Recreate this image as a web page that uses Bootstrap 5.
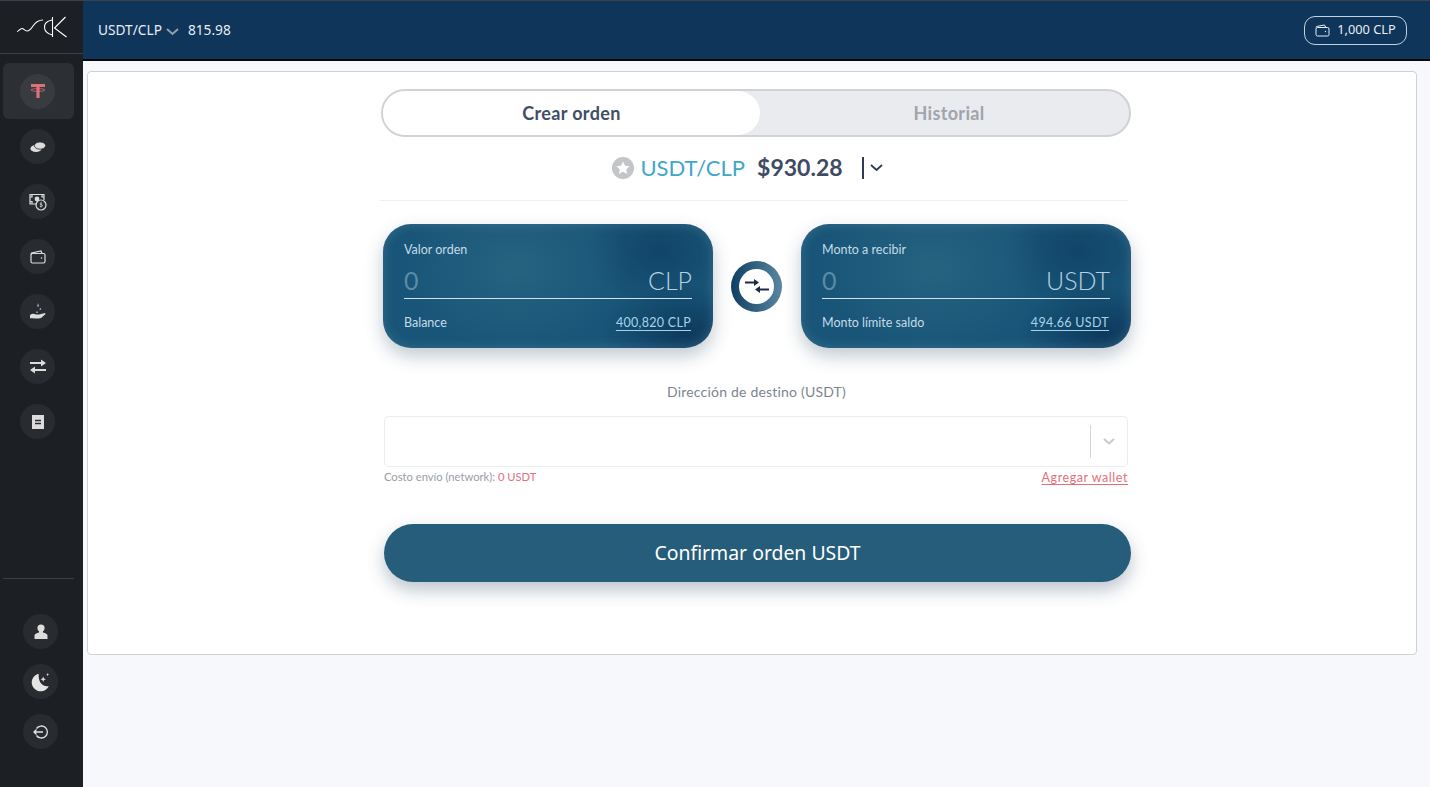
<!DOCTYPE html>
<html lang="es">
<head>
    <meta charset="UTF-8">
    <meta name="viewport" content="width=device-width, initial-scale=1.0">
    <title>Crear orden</title>
    <link href="https://cdn.jsdelivr.net/npm/bootstrap@5.3.3/dist/css/bootstrap.min.css" rel="stylesheet">
    <style>
        html, body { height: 100%; }
        body { background: #f6f8fb; font-family: "Lato", "Open Sans", sans-serif; overflow: hidden; }
        .side-bar { width: 83px; height: 787px; background: #1c2024; border-top: 1px solid #3c4148; flex: none; }
        .side-logo { height: 53px; border-bottom: 1px solid #3b3f43; }
        .side-main { padding-top: 9px; height: 524px; }
        .side-link { width: 71px; height: 55px; margin-left: 3px; padding-right: 2px; border-radius: 6px; }
        .side-link.is-on { background: #2c3034; height: 56px; }
        .side-dot { width: 35px; height: 35px; border-radius: 50%; background: #282b2f; }
        .side-link.is-on .side-dot { background: #383c40; }
        .side-foot { border-top: 1px solid #3b3f43; margin: 0 9px 0 3px; padding: 35px 0 0 4px; gap: 15px; }
        .top-bar { height: 61px; background: #10355a; border-top: 1px solid #3c4148; border-bottom: 2px solid #07090c; padding: 0 23px 0 15px; font-family: "Noto Sans", sans-serif; color: #e8eef4; font-size: 13.7px; }
        .top-pair { margin-right: 9px; }
        .wallet-pill { width: 103px; height: 29px; border: 1px solid #c3d2de; border-radius: 11px; font-size: 12.8px; gap: 7px; }
        .page-wrap { padding: 10px 13px 0 4px; }
        .order-box { height: 584px; border: 1px solid #cfd1d4; border-radius: 4px; padding-top: 17px; }
        .order-col { width: 750px; margin-left: 293px; }
        .tab-track { height: 48px; background: #e9ebef; border: 2px solid #d0d2d6; border-radius: 24px; font-size: 18px; font-weight: 700; letter-spacing: .35px; }
        .tab-on { width: 377px; background: #fff; color: #3f4e66; border-radius: 22px; }
        .tab-off { color: #a0a4ac; padding-left: 9px; }
        .pair-row { height: 63px; gap: 12px; font-size: 22px; padding: 0 17px 2px 0; }
        .pair-name { color: #3fa7c9; margin-left: -6px; }
        .pair-price { color: #3f4b63; font-weight: 700; font-size: 23px; }
        .pair-caret { border-left: 2px solid #2f3b50; height: 22px; margin-left: 7px; padding-left: 6px; }
        .pair-line { height: 1px; background: #eeeff1; margin: 0 3px 0 -1px; }
        .amount-row { margin-top: 23px; padding-left: 2px; }
        .amount-card { width: 330px; height: 124px; border-radius: 28px; padding: 17px 21px 0; color: #c4dbe8; font-size: 12.5px; line-height: 18px;
            background: radial-gradient(ellipse 34% 70% at 40% 35%, #266381 0%, rgba(38,99,129,0) 100%),
                        radial-gradient(ellipse 26% 40% at 92% 88%, #0d3a5e 0%, rgba(13,58,94,0) 100%),
                        radial-gradient(ellipse 22% 45% at 84% 22%, #124469 0%, rgba(18,68,105,0) 100%),
                        #185578;
            box-shadow: 0 8px 18px rgba(30, 60, 90, .28), inset 0 0 12px rgba(170, 195, 210, .22); }
        .amount-line { border-bottom: 1px solid #cfe3ee; height: 33px; margin-top: 7px; padding-bottom: 3px; font-size: 25px; font-weight: 300; line-height: 28px; color: #b6d2e2; }
        .amount-input { background: transparent; border: 0; outline: 0; padding: 0; width: 100px; height: 28px; color: #fff; }
        .amount-input::placeholder { color: #5b8ba6; opacity: 1; }
        .amount-foot { margin: 15px 1px 0 0; }
        .amount-link { color: #a5d4ea; letter-spacing: .3px; text-decoration: underline; text-underline-offset: 3px; }
        .swap-ring { width: 51px; height: 51px; border-radius: 50%; background: linear-gradient(90deg, #0f3f63, #5a86a0); margin-left: 18px; margin-right: 19px; }
        .swap-core { width: 35px; height: 35px; border-radius: 50%; background: #fff; }
        .dest-label { margin-top: 33px; font-size: 14px; color: #7d8492; letter-spacing: .2px; height: 21px; margin-left: 1px; }
        .dest-select { height: 51px; margin: 14px 3px 0; border: 1px solid #ebecee; border-radius: 5px; padding-right: 12px; }
        .dest-sep { width: 1px; height: 33px; background: #d4d5d7; margin-right: 12px; }
        .dest-note { margin: 2px 3px 0; font-size: 11.2px; color: #9a9ea6; }
        .dest-red { color: #e4707d; }
        .dest-wallet { color: #e4707d; font-size: 12.5px; text-decoration: underline; text-underline-offset: 2px; letter-spacing: .55px; }
        .confirm-btn { display: block; width: 747px; height: 58px; margin: 36px 0 0 3px; background: #255d7a; color: #fff; border: 0; border-radius: 29px; font-family: "Noto Sans", sans-serif; font-size: 19.4px; box-shadow: 0 8px 18px rgba(30, 60, 90, .3); }
        .confirm-btn:hover { background: #255d7a; color: #fff; }
    </style>
</head>
<body>
    <div class="d-flex">
        <aside class="side-bar d-flex flex-column">
            <div class="side-logo d-flex align-items-center justify-content-center">
                <svg width="52" height="24" viewBox="0 0 52 24" fill="none" stroke="#fff" stroke-width="1.1">
                    <path d="M1 16.500c1.500 0 3-3 5-3s2.500 2.500 5 2.500 4-2 6-5 5-6 10-6"/>
                    <path d="M36 5c-5 1-8 4-7.500 8s4 6 8 7"/>
                    <path d="M36.500 2v20M49.500 2 38.500 13l12 9"/>
                </svg>
            </div>
            <nav class="side-main d-flex flex-column">
                <a class="side-link is-on d-flex align-items-center justify-content-center" href="#">
                    <span class="side-dot d-flex align-items-center justify-content-center">
                        <svg width="16" height="16" viewBox="0 0 16 16" fill="#e07078"><path d="M1 1h14v3H9.600v11H6.400V4H1z"/><ellipse cx="8" cy="7" rx="7" ry="1.400" fill="none" stroke="#e07078" stroke-width=".7"/></svg>
                    </span>
                </a>
                <a class="side-link d-flex align-items-center justify-content-center" href="#">
                    <span class="side-dot d-flex align-items-center justify-content-center">
                        <svg width="16" height="12" viewBox="0 0 16 12" fill="#dcdcdc"><ellipse cx="6" cy="7.500" rx="5.600" ry="3.600"/><ellipse cx="10" cy="4.600" rx="5.600" ry="3.600" stroke="#282b2f" stroke-width=".8"/></svg>
                    </span>
                </a>
                <a class="side-link d-flex align-items-center justify-content-center" href="#">
                    <span class="side-dot d-flex align-items-center justify-content-center">
                        <svg width="18" height="18" viewBox="0 0 18 18" fill="none" stroke="#dcdcdc" stroke-width="1.200"><path d="M8 11H1V1.500h14V7"/><circle cx="8" cy="6" r="1.800" fill="#dcdcdc"/><path d="M1 4h2V1.500M13 1.500V4h2M1 8.500h2V11"/><circle cx="12" cy="12" r="5"/><path d="M12 9.500v5M10.800 13.500h1.600a.8.8 0 0 0 0-2h-.8a.8.8 0 0 1 0-1.500h1.500" stroke-width=".7"/></svg>
                    </span>
                </a>
                <a class="side-link d-flex align-items-center justify-content-center" href="#">
                    <span class="side-dot d-flex align-items-center justify-content-center">
                        <svg width="16" height="14" viewBox="0 0 16 14" fill="none" stroke="#dcdcdc" stroke-width="1.200"><path d="M1 4.500 1.500 3 11 1l1 2.500"/><rect x="1" y="3.500" width="14" height="9.500" rx="1.500"/><circle cx="11.500" cy="8" r=".8" fill="#dcdcdc" stroke="none"/></svg>
                    </span>
                </a>
                <a class="side-link d-flex align-items-center justify-content-center" href="#">
                    <span class="side-dot d-flex align-items-center justify-content-center">
                        <svg width="18" height="18" viewBox="0 0 18 18" fill="#dcdcdc"><path d="M9 0l.9 3.500H8.300zM11 5l1.400 1-1.800 1.200zM8 8l1 1.800H7.100z"/><path d="M1 12c2-1.500 4-1.500 6-.5h3l6-1.500c.8.400.5 1.300-.2 1.800L12 15c-3 .8-6 .6-8 .2H1z"/></svg>
                    </span>
                </a>
                <a class="side-link d-flex align-items-center justify-content-center" href="#">
                    <span class="side-dot d-flex align-items-center justify-content-center">
                        <svg width="18" height="15" viewBox="0 0 18 15" fill="#dcdcdc"><path d="M1 3h11V.5L17 4l-5 3.500V5H1z"/><path d="M17 10H6V7.500L1 11l5 3.500V12h11z"/></svg>
                    </span>
                </a>
                <a class="side-link d-flex align-items-center justify-content-center" href="#">
                    <span class="side-dot d-flex align-items-center justify-content-center">
                        <svg width="12" height="14" viewBox="0 0 12 14"><rect width="12" height="14" fill="#dcdcdc"/><path d="M3 5.500h6M3 8.500h6" stroke="#282b2f" stroke-width="1.500"/></svg>
                    </span>
                </a>
            </nav>
            <div class="side-foot d-flex flex-column align-items-center">
                <span class="side-dot d-flex align-items-center justify-content-center">
                    <svg width="14" height="15" viewBox="0 0 14 15" fill="#dcdcdc"><circle cx="7" cy="4" r="3.600"/><path d="M5 7h4v1.500c2.500.6 4.500 1.500 4.500 3V15H.5v-3.500c0-1.500 2-2.400 4.500-3z"/></svg>
                </span>
                <span class="side-dot d-flex align-items-center justify-content-center">
                    <svg width="20" height="20" viewBox="0 0 18 18" fill="#e4e4e4"><path d="M7 1.500a8 8 0 1 0 9 11c-4 1.500-10-2-9-11z"/><path d="M11 4l.7 1.800 1.800.7-1.800.7-.7 1.800-.7-1.800-1.800-.7 1.800-.7zM15 1l.4 1 1 .4-1 .4-.4 1-.4-1-1-.4 1-.4z"/></svg>
                </span>
                <span class="side-dot d-flex align-items-center justify-content-center">
                    <svg width="16" height="14" viewBox="0 0 16 14" fill="none" stroke="#e4e4e4" stroke-width="1.300"><path d="M3.500 3.500a6 6 0 1 1 0 7M1 7h9M3.500 4.500 1 7l2.500 2.500"/></svg>
                </span>
            </div>
        </aside>
        <div class="flex-grow-1">
            <header class="top-bar d-flex align-items-center justify-content-between">
                <div class="d-flex align-items-center">
                    <span>USDT/CLP</span>
                    <svg class="ms-1 mt-1 top-pair" width="13" height="8" viewBox="0 0 13 8" fill="none" stroke="#8fa0ae" stroke-width="2"><path d="M1 1l5.500 5L12 1"/></svg>
                    <span>815.98</span>
                </div>
                <div class="wallet-pill d-flex align-items-center justify-content-center">
                    <svg width="15" height="13" viewBox="0 0 15 13" fill="none" stroke="#e8eef4"><path d="M1 3.500 1.500 2.500 9.500 1l1 2"/><rect x="1" y="3.500" width="13" height="8.500" rx="1.500"/><circle cx="10.500" cy="7.500" r=".7" fill="#e8eef4" stroke="none"/></svg>
                    <span>1,000 CLP</span>
                </div>
            </header>
            <main class="page-wrap">
                <section class="order-box bg-white">
                    <div class="order-col">
                        <div class="tab-track d-flex">
                            <div class="tab-on d-flex align-items-center justify-content-center">Crear orden</div>
                            <div class="tab-off flex-grow-1 d-flex align-items-center justify-content-center">Historial</div>
                        </div>
                        <div class="pair-row d-flex align-items-center justify-content-center">
                            <svg width="22" height="22" viewBox="0 0 22 22"><circle cx="11" cy="11" r="11" fill="#c4c5c8"/><path d="M11 4.500l2 4.200 4.600.6-3.400 3.100.9 4.600-4.100-2.300-4.100 2.300.9-4.600-3.400-3.100 4.600-.6z" fill="#fff"/></svg>
                            <span class="pair-name">USDT/CLP</span>
                            <span class="pair-price">$930.28</span>
                            <span class="pair-caret d-flex align-items-center">
                                <svg width="13" height="8" viewBox="0 0 13 8" fill="none" stroke="#2f3b50" stroke-width="1.800"><path d="M1 1l5.500 5L12 1"/></svg>
                            </span>
                        </div>
                        <div class="pair-line"></div>
                        <div class="amount-row d-flex align-items-center">
                            <div class="amount-card">
                                <div>Valor orden</div>
                                <div class="amount-line d-flex justify-content-between">
                                    <input class="amount-input" type="text" placeholder="0">
                                    <span>CLP</span>
                                </div>
                                <div class="amount-foot d-flex justify-content-between">
                                    <span>Balance</span>
                                    <a class="amount-link" href="#">400,820 CLP</a>
                                </div>
                            </div>
                            <div class="swap-ring d-flex align-items-center justify-content-center">
                                <div class="swap-core d-flex align-items-center justify-content-center">
                                    <svg width="26" height="16" viewBox="0 0 26 16" fill="#1d2a44" stroke="#1d2a44"><path d="M1 4.500h11" stroke-width="2"/><path d="M10 1 15 4.500 10 8z" stroke="none"/><path d="M25 11.500H14" stroke-width="2"/><path d="M16 8 11 11.500 16 15z" stroke="none"/></svg>
                                </div>
                            </div>
                            <div class="amount-card">
                                <div>Monto a recibir</div>
                                <div class="amount-line d-flex justify-content-between">
                                    <input class="amount-input" type="text" placeholder="0">
                                    <span>USDT</span>
                                </div>
                                <div class="amount-foot d-flex justify-content-between">
                                    <span>Monto límite saldo</span>
                                    <a class="amount-link" href="#">494.66 USDT</a>
                                </div>
                            </div>
                        </div>
                        <div class="dest-label text-center">Dirección de destino (USDT)</div>
                        <div class="dest-select d-flex align-items-center justify-content-end">
                            <span class="dest-sep"></span>
                            <svg width="12" height="7" viewBox="0 0 12 7" fill="none" stroke="#c8c9cb" stroke-width="2"><path d="M1 1l5 4.500L11 1"/></svg>
                        </div>
                        <div class="dest-note d-flex justify-content-between align-items-start">
                            <span>Costo envío (network): <span class="dest-red">0 USDT</span></span>
                            <a class="dest-wallet" href="#">Agregar wallet</a>
                        </div>
                        <button class="btn confirm-btn" type="button">Confirmar orden USDT</button>
                    </div>
                </section>
            </main>
        </div>
    </div>
    <script src="https://cdn.jsdelivr.net/npm/bootstrap@5.3.3/dist/js/bootstrap.bundle.min.js"></script>
</body>
</html>
